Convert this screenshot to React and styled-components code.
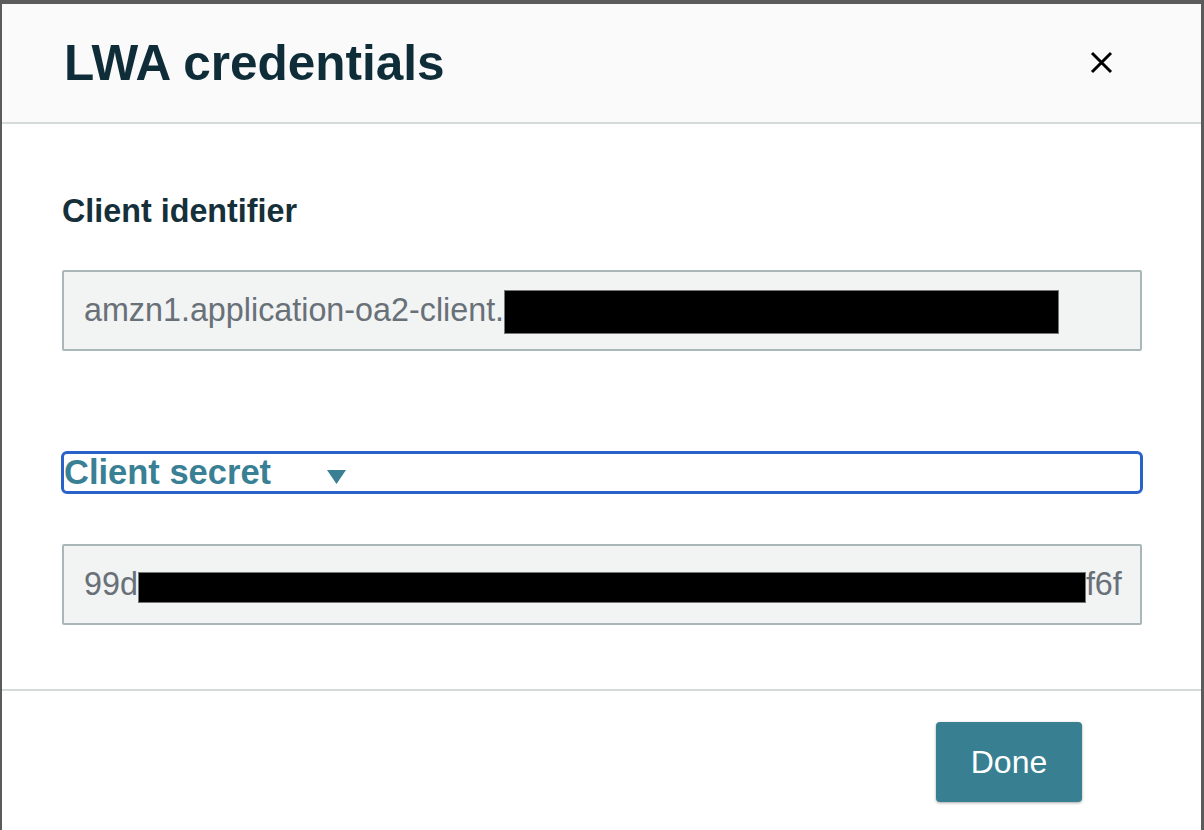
import React from "react";
import styled, { createGlobalStyle } from "styled-components";

const Global = createGlobalStyle`
  html, body { margin: 0; padding: 0; }
  body { font-family: "Liberation Sans", Arial, Helvetica, sans-serif; }
`;

const Frame = styled.div`
  width: 1204px;
  height: 830px;
  box-sizing: border-box;
  background: #5b5b5b;
  padding: 4px 3px 0 2px;
  overflow: hidden;
`;

const Modal = styled.div`
  background: #fff;
  height: 826px;
  display: flex;
  flex-direction: column;
`;

const Header = styled.div`
  height: 118px;
  background: #fafafa;
  border-bottom: 2px solid #d5dbdb;
  display: flex;
  align-items: center;
  justify-content: space-between;
  padding: 0 88px 0 62px;
`;

const Title = styled.h1`
  margin: 0;
  font-size: 49.5px;
  font-weight: 700;
  color: #0f2d38;
  padding-bottom: 2px;
`;

const Close = styled.button`
  border: 0;
  background: none;
  padding: 0;
  width: 23px;
  height: 23px;
  cursor: pointer;
  margin-bottom: 2px;
`;

const Body = styled.div`
  padding: 69px 59px 0 60px;
  display: flex;
  flex-direction: column;
  border-bottom: 2px solid #d5dbdb;
  padding-bottom: 64px;
`;

const Label = styled.div`
  font-size: 32.3px;
  line-height: 37px;
  font-weight: 700;
  color: #16303a;
  margin-bottom: 40px;
`;

const Field = styled.div`
  height: 81px;
  box-sizing: border-box;
  background: #f2f3f3;
  border: 2px solid #aab7b8;
  border-radius: 2px;
  display: flex;
  align-items: center;
  padding: 0 20px;
  overflow: hidden;
  white-space: nowrap;
  font-size: 32.3px;
  color: #687078;
  margin-top: ${(p) => p.$top || 0}px;
`;

const Redact = styled.span`
  display: inline-block;
  flex: none;
  width: ${(p) => p.$w}px;
  height: ${(p) => p.$h}px;
  background: #000;
  border: 1px solid #777;
  box-sizing: border-box;
  margin-top: ${(p) => p.$dy || 0}px;
`;

const Toggle = styled.button`
  margin: 100px -1px 0 -1px;
  height: 43px;
  box-sizing: border-box;
  border: 3px solid #2b62c9;
  border-radius: 6px;
  background: #fff;
  display: flex;
  align-items: center;
  padding: 0;
  font-family: inherit;
  font-size: 34.5px;
  font-weight: 700;
  color: #3a8094;
  text-align: left;
  cursor: pointer;
`;

const Caret = styled.svg`
  margin-left: 56px;
  margin-top: 8px;
`;

const Footer = styled.div`
  display: flex;
  justify-content: flex-end;
  padding: 31px 119px 0 0;
`;

const Done = styled.button`
  width: 146px;
  height: 80px;
  border: 0;
  border-radius: 4px;
  background: #377f91;
  color: #fff;
  font-family: inherit;
  font-size: 32px;
  box-shadow: 0 1px 3px rgba(0, 0, 0, 0.35);
  cursor: pointer;
`;

export default function App() {
  return (
    <Frame>
      <Global />
      <Modal>
        <Header>
          <Title>LWA credentials</Title>
          <Close aria-label="Close">
            <svg width="23" height="23" viewBox="0 0 23 23">
              <path d="M2 2 L21 21 M21 2 L2 21" stroke="#000" strokeWidth="3" />
            </svg>
          </Close>
        </Header>
        <Body>
          <Label>Client identifier</Label>
          <Field>
            amzn1.application-oa2-client.
            <Redact $w={555} $h={44} $dy={2} />
          </Field>
          <Toggle>
            Client secret
            <Caret width="19" height="14" viewBox="0 0 19 14">
              <path d="M0 0 H19 L9.5 14 Z" fill="#3a8094" />
            </Caret>
          </Toggle>
          <Field $top={50}>
            99d
            <Redact $w={948} $h={31} $dy={6} />
            f6f
          </Field>
        </Body>
        <Footer>
          <Done>Done</Done>
        </Footer>
      </Modal>
    </Frame>
  );
}
